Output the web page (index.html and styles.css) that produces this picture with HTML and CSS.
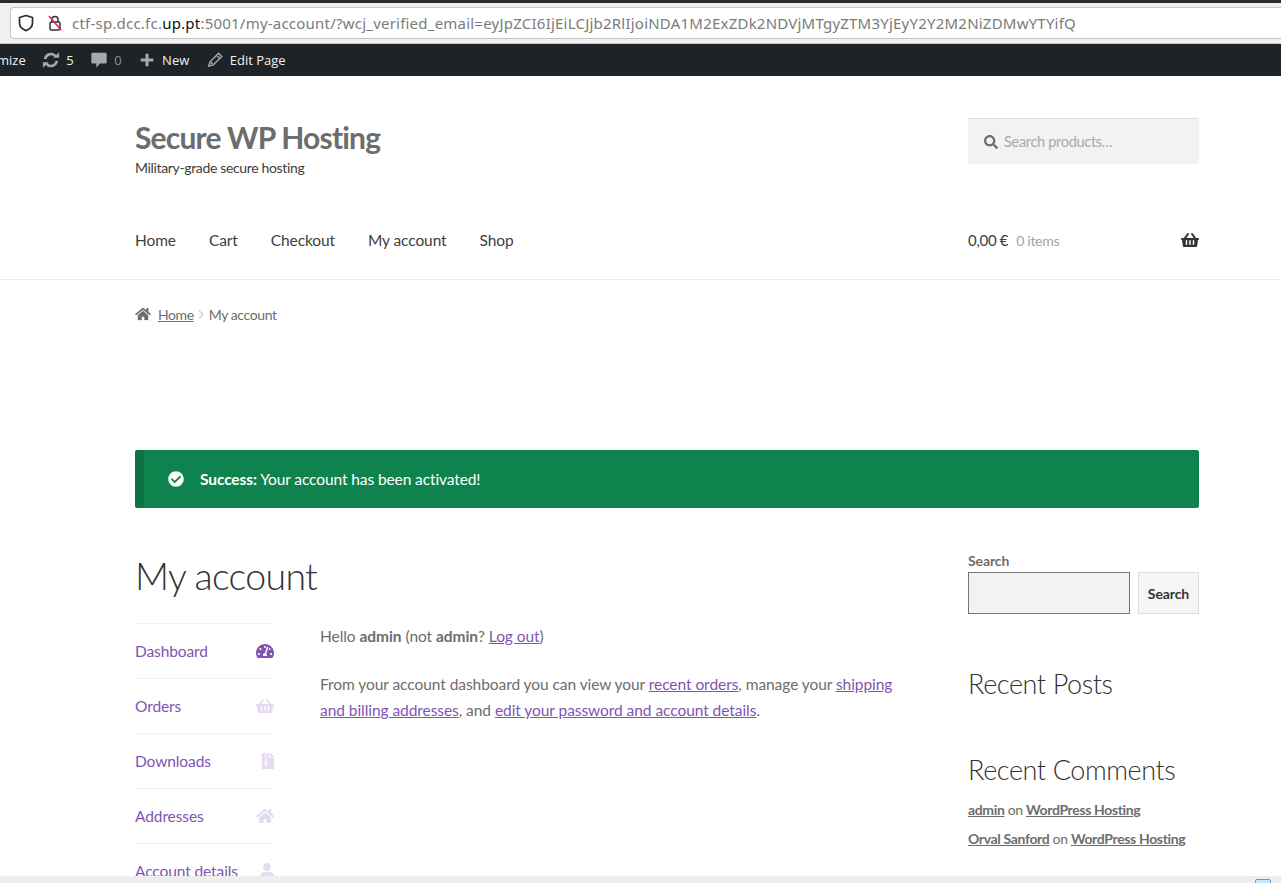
FILE: index.html
```html
<!DOCTYPE html>
<html>
<head>
	<meta charset="utf-8">
	<title>My account – Secure WP Hosting</title>
	<link rel="stylesheet" href="styles.css">
</head>
<body>
	<div class="browser-bar">
		<div class="url-box">
			<svg class="shield-icon" viewBox="0 0 16 18" width="16" height="18"><path d="M8 1.5 14.5 3.5V9c0 3.6-2.8 6.2-6.5 7.6C4.3 15.2 1.500 12.6 1.5 9V3.5z" fill="none" stroke="#2b2b2b" stroke-width="1.7" stroke-linejoin="round"/></svg>
			<svg class="lock-icon" viewBox="0 0 16 18" width="16" height="18"><path d="M5 8V5.500a3 3 0 0 1 6 0V8" fill="none" stroke="#333" stroke-width="1.5"/><rect x="3" y="8" width="10" height="8" rx="1.5" fill="none" stroke="#333" stroke-width="1.5"/><path d="M2 2 14 16" stroke="#e22850" stroke-width="1.6"/></svg>
			<span class="url-text">ctf-sp.dcc.fc.<b>up.pt</b>:5001/my-account/?wcj_verified_email=eyJpZCI6IjEiLCJjb2RlIjoiNDA1M2ExZDk2NDVjMTgyZTM3YjEyY2Y2M2NiZDMwYTYifQ</span>
		</div>
	</div>

	<div class="admin-bar">
		<span class="admin-item admin-cut">mize</span>
		<span class="admin-item">
			<svg viewBox="0 0 20 20" width="18" height="18"><path d="M3.5 9A6.6 6.6 0 0 1 15.2 5.8M16.5 11A6.6 6.6 0 0 1 4.8 14.2" fill="none" stroke="#a7aaad" stroke-width="2.8"/><path d="M12.5 7.5H19V1.500zM7.5 12.5H1V18.500z" fill="#a7aaad"/></svg>
			5
		</span>
		<span class="admin-item admin-dim">
			<svg viewBox="0 0 20 20" width="18" height="18"><path d="M3 2h14a1.500 1.500 0 0 1 1.500 1.500v9A1.500 1.500 0 0 1 17 14h-6l-4 4.500V14H3a1.500 1.500 0 0 1-1.500-1.500v-9A1.500 1.500 0 0 1 3 2z" fill="#a7aaad"/></svg>
			0
		</span>
		<span class="admin-item">
			<svg viewBox="0 0 20 20" width="18" height="18"><path d="M8.3 3h3.4v5.3H17v3.400h-5.300V17H8.3v-5.300H3V8.300h5.300z" fill="#a7aaad"/></svg>
			New
		</span>
		<span class="admin-item">
			<svg viewBox="0 0 20 20" width="18" height="18"><path d="M14 2.500 17.500 6 8 15.500 3 17l1.500-5zM12.500 5.500 14.500 7.500M5.500 12.500 7.500 14.500" fill="none" stroke="#a7aaad" stroke-width="1.6"/></svg>
			Edit Page
		</span>
	</div>

	<header class="site-header">
		<div class="container header-top">
			<div class="branding">
				<div class="site-title">Secure WP Hosting</div>
				<div class="site-tagline">Military-grade secure hosting</div>
			</div>
			<div class="product-search">
				<svg class="ico" viewBox="0 0 512 512" width="14" height="14"><path fill="#6d6d6d" d="M505 442.7L405.300 343c-4.500-4.500-10.600-7-17-7H372c27.600-35.300 44-79.700 44-128C416 93.100 322.900 0 208 0S0 93.100 0 208s93.100 208 208 208c48.300 0 92.700-16.400 128-44v16.300c0 6.400 2.500 12.500 7 17l99.700 99.700c9.400 9.400 24.600 9.400 33.900 0l28.300-28.300c9.400-9.400 9.400-24.600.1-34zM208 336c-70.700 0-128-57.200-128-128 0-70.700 57.200-128 128-128 70.700 0 128 57.200 128 128 0 70.700-57.200 128-128 128z"/></svg>
				<span>Search products…</span>
			</div>
		</div>
		<div class="container header-nav">
			<nav class="main-nav">
				<a>Home</a>
				<a>Cart</a>
				<a>Checkout</a>
				<a>My account</a>
				<a>Shop</a>
			</nav>
			<div class="mini-cart">
				<span class="cart-total">0,00 €</span>
				<span class="cart-count">0 items</span>
				<svg class="cart-icon" viewBox="0 0 576 512" width="18" height="16"><path fill="#333333" d="M576 216v16c0 13.255-10.745 24-24 24h-8l-26.113 182.788C514.509 462.435 494.257 480 470.370 480H105.630c-23.887 0-44.139-17.565-47.518-41.212L32 256h-8c-13.255 0-24-10.745-24-24v-16c0-13.255 10.745-24 24-24h67.341l106.780-146.821c10.395-14.292 30.407-17.453 44.701-7.058 14.293 10.395 17.453 30.408 7.058 44.701L170.477 192h235.046L326.120 82.821c-10.395-14.292-7.234-34.306 7.059-44.701 14.291-10.395 34.306-7.235 44.701 7.058L484.659 192H552c13.255 0 24 10.745 24 24zM312 392V280c0-13.255-10.745-24-24-24s-24 10.745-24 24v112c0 13.255 10.745 24 24 24s24-10.745 24-24zm112 0V280c0-13.255-10.745-24-24-24s-24 10.745-24 24v112c0 13.255 10.745 24 24 24s24-10.745 24-24zm-224 0V280c0-13.255-10.745-24-24-24s-24 10.745-24 24v112c0 13.255 10.745 24 24 24s24-10.745 24-24z"/></svg>
			</div>
		</div>
	</header>

	<div class="container">
		<div class="breadcrumb">
			<svg viewBox="0 0 576 512" width="16" height="14"><path fill="#6d6d6d" d="M280.370 148.260L96 300.110V464a16 16 0 0 0 16 16l112.060-.29a16 16 0 0 0 15.920-16V368a16 16 0 0 1 16-16h64a16 16 0 0 1 16 16v95.640a16 16 0 0 0 16 16.050L464 480a16 16 0 0 0 16-16V300L295.670 148.260a12.190 12.190 0 0 0-15.300 0zM571.600 251.470L488 182.560V44.050a12 12 0 0 0-12-12h-56a12 12 0 0 0-12 12v72.610L318.470 43a48 48 0 0 0-61 0L4.340 251.470a12 12 0 0 0-1.600 16.900l25.500 31A12 12 0 0 0 45.150 301l235.220-193.740a12.190 12.190 0 0 1 15.300 0L530.900 301a12 12 0 0 0 16.900-1.600l25.500-31a12 12 0 0 0-1.700-16.930z"/></svg>
			<a>Home</a>
			<svg class="crumb-sep" viewBox="0 0 8 12" width="6" height="9"><path d="M1.500 1 6.500 6 1.500 11" fill="none" stroke="#cfcfcf" stroke-width="2"/></svg>
			<span>My account</span>
		</div>

		<div class="notice">
			<svg viewBox="0 0 512 512" width="16" height="16"><path fill="#ffffff" d="M504 256c0 136.967-111.033 248-248 248S8 392.967 8 256 119.033 8 256 8s248 111.033 248 248zM227.314 387.314l184-184c6.248-6.248 6.248-16.379 0-22.627l-22.627-22.627c-6.248-6.249-16.379-6.249-22.628 0L216 308.118l-70.059-70.059c-6.248-6.248-16.379-6.248-22.628 0l-22.627 22.627c-6.248 6.248-6.248 16.379 0 22.627l104 104c6.249 6.249 16.379 6.249 22.628 0z"/></svg>
			<span><b>Success:</b> Your account has been activated!</span>
		</div>

		<div class="columns">
			<main class="content">
				<h1 class="page-title">My account</h1>
				<div class="account">
					<ul class="account-nav">
						<li class="active"><a>Dashboard</a>
							<svg viewBox="0 0 576 512" width="18" height="16"><path d="M288 32C128.940 32 0 160.940 0 320c0 52.800 14.250 102.260 39.060 144.800 5.610 9.620 16.300 15.200 27.440 15.200h443c11.140 0 21.830-5.580 27.440-15.200C561.750 422.260 576 372.800 576 320c0-159.060-128.940-288-288-288zm0 64c14.710 0 26.580 10.130 30.320 23.650-1.110 2.260-2.640 4.230-3.450 6.670l-9.220 27.670c-5.130 3.490-10.970 6.010-17.640 6.010-17.670 0-32-14.330-32-32S270.330 96 288 96zM96 384c-17.670 0-32-14.330-32-32s14.330-32 32-32 32 14.330 32 32-14.330 32-32 32zm48-160c-17.670 0-32-14.330-32-32s14.330-32 32-32 32 14.330 32 32-14.330 32-32 32zm246.770-72.410l-61.330 184C343.130 347.330 352 364.540 352 384c0 11.720-3.380 22.550-8.880 32H232.880c-5.500-9.450-8.880-20.280-8.880-32 0-33.940 26.500-61.430 59.900-63.590l61.340-184.010c4.170-12.560 17.730-19.450 30.360-15.170 12.570 4.190 19.350 17.790 15.170 30.360zm14.660 57.200l15.520-46.550c3.470-1.290 7.130-2.230 11.050-2.230 17.670 0 32 14.330 32 32s-14.330 32-32 32c-11.380-.01-20.890-6.280-26.570-15.220zM480 384c-17.670 0-32-14.330-32-32s14.330-32 32-32 32 14.330 32 32-14.330 32-32 32z"/></svg>
						</li>
						<li><a>Orders</a>
							<svg viewBox="0 0 576 512" width="18" height="16"><path d="M576 216v16c0 13.255-10.745 24-24 24h-8l-26.113 182.788C514.509 462.435 494.257 480 470.370 480H105.630c-23.887 0-44.139-17.565-47.518-41.212L32 256h-8c-13.255 0-24-10.745-24-24v-16c0-13.255 10.745-24 24-24h67.341l106.780-146.821c10.395-14.292 30.407-17.453 44.701-7.058 14.293 10.395 17.453 30.408 7.058 44.701L170.477 192h235.046L326.120 82.821c-10.395-14.292-7.234-34.306 7.059-44.701 14.291-10.395 34.306-7.235 44.701 7.058L484.659 192H552c13.255 0 24 10.745 24 24zM312 392V280c0-13.255-10.745-24-24-24s-24 10.745-24 24v112c0 13.255 10.745 24 24 24s24-10.745 24-24zm112 0V280c0-13.255-10.745-24-24-24s-24 10.745-24 24v112c0 13.255 10.745 24 24 24s24-10.745 24-24zm-224 0V280c0-13.255-10.745-24-24-24s-24 10.745-24 24v112c0 13.255 10.745 24 24 24s24-10.745 24-24z"/></svg>
						</li>
						<li><a>Downloads</a>
							<svg viewBox="0 0 384 512" width="12" height="16"><path d="M377 105L279.100 7c-4.500-4.500-10.600-7-17-7H256v128h128v-6.100c0-6.300-2.500-12.400-7-16.900zM128.400 336c-17.900 0-32.400 12.100-32.400 27 0 15 14.600 27 32.500 27s32.400-12.100 32.400-27-14.600-27-32.500-27zM224 136V0h-63.600v32h-32V0H24C10.700 0 0 10.700 0 24v464c0 13.300 10.700 24 24 24h336c13.300 0 24-10.700 24-24V160H248c-13.200 0-24-10.800-24-24zM95.900 32h32v32h-32zm32.300 384c-33.200 0-58-30.400-51.400-62.900L96.400 256v-32h32v-32h-32v-32h32v-32h-32V96h32V64h32v32h-32v32h32v32h-32v32h32v32h-32v32h22.100c5.700 0 10.700 4.100 11.800 9.700l17.300 87.700c6.400 32.400-18.400 62.600-51.400 62.600z"/></svg>
						</li>
						<li><a>Addresses</a>
							<svg viewBox="0 0 576 512" width="18" height="16"><path d="M280.370 148.260L96 300.110V464a16 16 0 0 0 16 16l112.060-.29a16 16 0 0 0 15.920-16V368a16 16 0 0 1 16-16h64a16 16 0 0 1 16 16v95.640a16 16 0 0 0 16 16.050L464 480a16 16 0 0 0 16-16V300L295.670 148.260a12.190 12.190 0 0 0-15.300 0zM571.600 251.470L488 182.560V44.050a12 12 0 0 0-12-12h-56a12 12 0 0 0-12 12v72.610L318.470 43a48 48 0 0 0-61 0L4.340 251.470a12 12 0 0 0-1.600 16.900l25.500 31A12 12 0 0 0 45.150 301l235.220-193.740a12.190 12.190 0 0 1 15.300 0L530.900 301a12 12 0 0 0 16.900-1.600l25.500-31a12 12 0 0 0-1.700-16.930z"/></svg>
						</li>
						<li><a>Account details</a>
							<svg viewBox="0 0 448 512" width="14" height="16"><path d="M224 256c70.700 0 128-57.300 128-128S294.700 0 224 0 96 57.300 96 128s57.300 128 128 128zm89.600 32h-16.700c-22.200 10.200-46.900 16-72.900 16s-50.600-5.800-72.900-16h-16.700C60.200 288 0 348.200 0 422.400V464c0 26.500 21.500 48 48 48h352c26.500 0 48-21.500 48-48v-41.600c0-74.200-60.200-134.400-134.400-134.400z"/></svg>
						</li>
					</ul>
					<div class="account-body">
						<p>Hello <b>admin</b> (not <b>admin</b>? <a>Log out</a>)</p>
						<p>From your account dashboard you can view your <a>recent orders</a>, manage your <a>shipping and billing addresses</a>, and <a>edit your password and account details</a>.</p>
					</div>
				</div>
			</main>

			<aside class="widgets">
				<div class="search-widget">
					<div class="search-label">Search</div>
					<div class="search-row">
						<div class="search-input"></div>
						<div class="search-btn">Search</div>
					</div>
				</div>
				<h2 class="widget-title">Recent Posts</h2>
				<h2 class="widget-title widget-title-comments">Recent Comments</h2>
				<ul class="comment-list">
					<li><a>admin</a> on <a>WordPress Hosting</a></li>
					<li><a>Orval Sanford</a> on <a>WordPress Hosting</a></li>
				</ul>
			</aside>
		</div>
	</div>

	<div class="status-strip">
		<span class="status-icon"></span>
	</div>
</body>
</html>
```

FILE: styles.css
```css
* {
	box-sizing: border-box;
}

html, body {
	height: 883px;
	overflow: hidden;
}

body {
	margin: 0;
	background: #fff;
	color: #6d6d6d;
	font-family: Lato, "Open Sans", sans-serif;
	font-size: 15.5px;
	letter-spacing: -0.1px;
}

/* browser chrome */
.browser-bar {
	height: 44px;
	padding: 4px 0 0 10px;
	background: #f0f0f0;
	border-top: 3px solid #2c2c2c;
	border-bottom: 1px solid #c9c9c9;
}

.url-box {
	display: flex;
	align-items: center;
	height: 32px;
	padding-left: 7px;
	background: #fff;
	border: 1px solid #c4c4c4;
	border-right: 0;
	border-radius: 4px 0 0 4px;
}

.lock-icon {
	margin-left: 13px;
}

.url-text {
	margin-left: 9px;
	color: #7b7b7b;
	font-family: "Noto Sans", sans-serif;
	font-size: 15px;
	letter-spacing: 0.22px;
	white-space: nowrap;
}

.url-text b {
	color: #111;
	font-weight: 400;
}

.admin-bar {
	display: flex;
	align-items: center;
	height: 32px;
	background: #1d2327;
	color: #f0f0f1;
	font-family: "Open Sans", sans-serif;
	font-size: 13px;
	letter-spacing: 0;
}

.admin-item {
	display: flex;
	align-items: center;
	gap: 6px;
	margin-right: 16.5px;
}

.admin-cut {
	margin-left: -3px;
}

.admin-dim {
	color: #8c8f94;
}

.container {
	width: 1064px;
	margin: 0 0 0 135px;
}

/* site header */
.site-header {
	border-bottom: 1px solid #ebebeb;
}

.header-top {
	display: flex;
	justify-content: space-between;
	padding-top: 42px;
}

.site-title {
	color: #6d6d6d;
	font-size: 30px;
	font-weight: 700;
	letter-spacing: -0.8px;
	line-height: 38px;
}

.site-tagline {
	margin-top: 2px;
	color: #404040;
	font-size: 14px;
	line-height: 20px;
	letter-spacing: -0.35px;
}

.product-search {
	display: flex;
	align-items: center;
	gap: 6px;
	width: 231px;
	height: 46px;
	padding-left: 16px;
	background: #f2f2f2;
	border-top: 1px solid #e0e0e0;
	color: #a9a9a9;
	font-size: 14.5px;
	letter-spacing: -0.3px;
}

.header-nav {
	display: flex;
	justify-content: space-between;
	align-items: center;
	height: 40px;
	margin-top: 42px;
	margin-bottom: 19px;
}

.main-nav {
	display: flex;
	gap: 33px;
	color: #404040;
}

.mini-cart {
	display: flex;
	align-items: center;
	width: 231px;
	color: #404040;
}

.cart-total {
	font-size: 15px;
	letter-spacing: -0.3px;
}

.cart-count {
	margin-left: 8px;
	color: #a3a3a3;
	font-size: 14px;
	letter-spacing: -0.3px;
}

.cart-icon {
	margin-left: auto;
}

/* breadcrumb */
.breadcrumb {
	display: flex;
	align-items: center;
	gap: 6px;
	height: 20px;
	margin-top: 24px;
	font-size: 14px;
	letter-spacing: -0.4px;
}

.breadcrumb a {
	margin-left: 1px;
	text-decoration: underline;
}

.crumb-sep {
	margin: 0 -1px 0 -2px;
}

/* notice */
.notice {
	display: flex;
	align-items: center;
	gap: 16px;
	height: 58px;
	margin-top: 126px;
	padding-left: 24px;
	background: #0f834d;
	border-left: 9px solid #0d7344;
	border-radius: 2px;
	color: #fff;
}

/* columns */
.columns {
	display: flex;
	justify-content: space-between;
}

.content {
	width: 785px;
}

.page-title {
	margin: 43px 0 0;
	color: #333;
	font-size: 37.5px;
	font-weight: 300;
	letter-spacing: -0.7px;
	line-height: 50px;
}

.account {
	display: flex;
	margin-top: 22px;
}

.account-nav {
	flex: none;
	width: 139px;
	margin: 0;
	padding: 0;
	list-style: none;
	color: #7f54b3;
}

.account-nav li {
	display: flex;
	align-items: center;
	justify-content: space-between;
	height: 55px;
	border-top: 1px solid #f0f0f0;
}

.account-nav svg {
	fill: #e4dbf0;
}

.account-nav .active svg {
	fill: #7f54b3;
}

.account-body {
	margin-left: 46px;
	line-height: 26px;
	letter-spacing: -0.06px;
}

.account-body p {
	margin: 0 0 22px;
}

.account-body a {
	color: #7f54b3;
	text-decoration: underline;
}

/* right sidebar */
.widgets {
	width: 231px;
}

.search-widget {
	margin-top: 44px;
}

.search-label {
	font-size: 14px;
	font-weight: 700;
	line-height: 18px;
	margin-bottom: 2px;
}

.search-row {
	display: flex;
	gap: 8px;
}

.search-input {
	width: 162px;
	height: 42px;
	background: #f2f2f2;
	border: 1px solid #777;
}

.search-btn {
	display: flex;
	align-items: center;
	justify-content: center;
	width: 61px;
	height: 42px;
	background: #f5f5f5;
	border: 1px solid #ddd;
	color: #333;
	font-size: 14px;
	font-weight: 700;
}

.widget-title {
	margin: 52px 0 0;
	color: #333;
	font-size: 27px;
	font-weight: 300;
	letter-spacing: -0.4px;
	line-height: 36px;
}

.widget-title-comments {
	margin-top: 50px;
}

.comment-list {
	margin: 7px 0 0;
	padding: 0;
	list-style: none;
	font-size: 14px;
	letter-spacing: -0.35px;
	line-height: 29px;
}

.comment-list a {
	font-weight: 700;
	text-decoration: underline;
}

/* bottom strip of the window, lies over the page */
.status-strip {
	position: fixed;
	left: 0;
	right: 0;
	bottom: 0;
	height: 7px;
	background: #eeeeee;
}

.status-icon {
	position: absolute;
	left: 1255px;
	top: 3px;
	width: 16px;
	height: 8px;
	background: #cfe6f5;
	border: 1px solid #4aa3dc;
	border-radius: 2px;
}
```
